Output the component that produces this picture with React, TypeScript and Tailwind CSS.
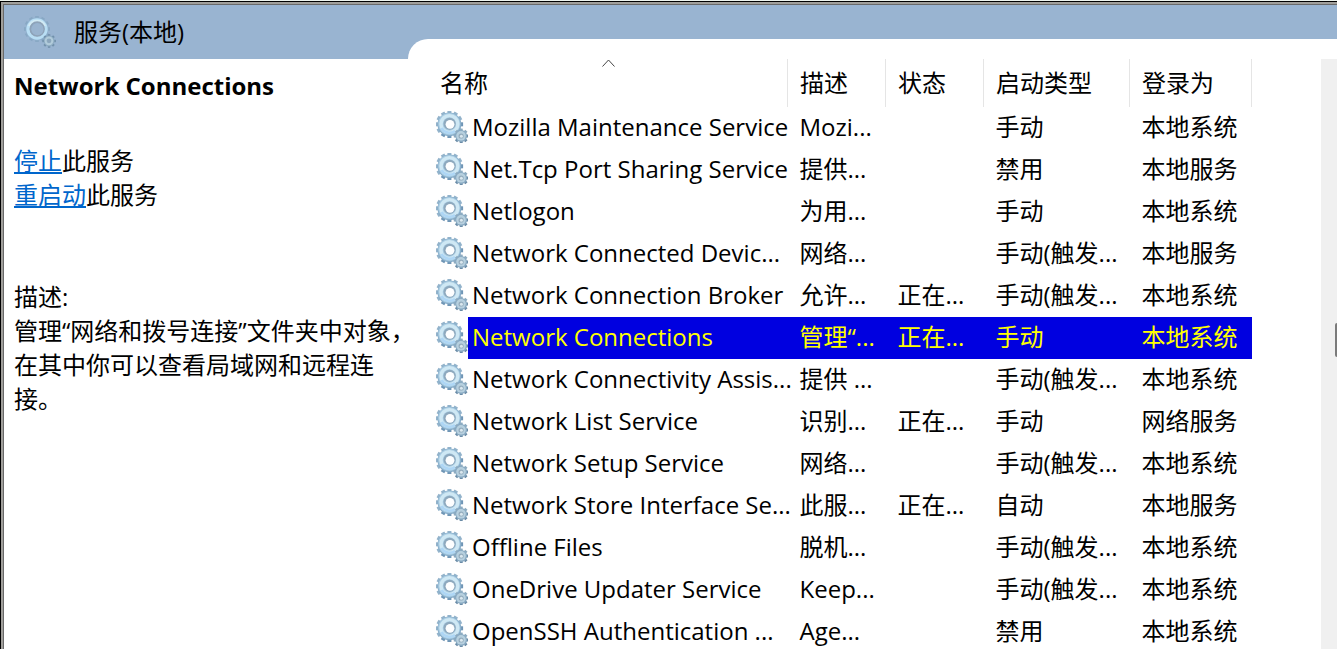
type Service = {
  name: string;
  desc: string;
  status: string;
  start: string;
  logon: string;
};

const services: Service[] = [
  { name: "Mozilla Maintenance Service", desc: "Mozi...", status: "", start: "手动", logon: "本地系统" },
  { name: "Net.Tcp Port Sharing Service", desc: "提供...", status: "", start: "禁用", logon: "本地服务" },
  { name: "Netlogon", desc: "为用...", status: "", start: "手动", logon: "本地系统" },
  { name: "Network Connected Devic...", desc: "网络...", status: "", start: "手动(触发...", logon: "本地服务" },
  { name: "Network Connection Broker", desc: "允许...", status: "正在...", start: "手动(触发...", logon: "本地系统" },
  { name: "Network Connections", desc: "管理“...", status: "正在...", start: "手动", logon: "本地系统" },
  { name: "Network Connectivity Assis...", desc: "提供 ...", status: "", start: "手动(触发...", logon: "本地系统" },
  { name: "Network List Service", desc: "识别...", status: "正在...", start: "手动", logon: "网络服务" },
  { name: "Network Setup Service", desc: "网络...", status: "", start: "手动(触发...", logon: "本地系统" },
  { name: "Network Store Interface Se...", desc: "此服...", status: "正在...", start: "自动", logon: "本地服务" },
  { name: "Offline Files", desc: "脱机...", status: "", start: "手动(触发...", logon: "本地系统" },
  { name: "OneDrive Updater Service", desc: "Keep...", status: "", start: "手动(触发...", logon: "本地系统" },
  { name: "OpenSSH Authentication ...", desc: "Age...", status: "", start: "禁用", logon: "本地系统" },
];

const selected = "Network Connections";

const bigTeeth = [0, 30, 60, 90, 120, 150, 180, 210, 240, 270, 300, 330];
const smallTeeth = [0, 45, 90, 135, 180, 225, 270, 315];

function ServiceIcon() {
  return (
    <svg viewBox="0 0 32 32" className="size-8 shrink-0" aria-hidden="true">
      {bigTeeth.map((a) => (
        <rect key={a} x="11.4" y="-0.4" width="4" height="5" fill={a > 60 && a < 240 ? "#6f95b5" : "#93b3cb"} transform={`rotate(${a} 13.4 13.3)`} />
      ))}
      <circle cx="13.4" cy="13.3" r="11.9" fill="#86acc9" />
      <circle cx="13.2" cy="12.9" r="11" fill="#a9cce2" />
      <circle cx="13.4" cy="13" r="8.4" fill="none" stroke="#cfe8f4" strokeWidth="3.4" />
      <path d="M5.6 17a9 9 0 0 0 13.4 3" fill="none" stroke="#aed6f5" strokeWidth="2.6" />
      <circle cx="13.6" cy="12.8" r="6.1" fill="#8ea9be" />
      <circle cx="14" cy="13.3" r="4.4" fill="#fdfeff" />
      {smallTeeth.map((a) => (
        <rect key={a} x="23.7" y="17.6" width="3" height="4" fill={a > 45 && a < 250 ? "#6a8ba6" : "#8eabc0"} transform={`rotate(${a} 25.2 25)`} />
      ))}
      <circle cx="25.2" cy="25" r="5.9" fill="#8aabc3" />
      <circle cx="25" cy="24.8" r="4.8" fill="#b7d0df" />
      <circle cx="25.1" cy="25" r="2.6" fill="#94acbd" />
      <circle cx="25.4" cy="25.3" r="1.5" fill="#dbe8ef" />
    </svg>
  );
}

function HeaderIcon() {
  return (
    <svg viewBox="0 0 32 32" className="size-8 shrink-0" aria-hidden="true">
      {bigTeeth.map((a) => (
        <rect key={a} x="11.2" y="0" width="3.6" height="4" fill="#88a8c4" transform={`rotate(${a} 13 13)`} />
      ))}
      <circle cx="13" cy="13" r="11.4" fill="#8fb0cd" />
      <circle cx="13" cy="13" r="9" fill="none" stroke="#b9def4" strokeWidth="3.4" />
      <path d="M5 10a8.8 8.8 0 0 1 16 0" fill="none" stroke="#d3ebf4" strokeWidth="2.4" />
      <circle cx="13.2" cy="13" r="6.8" fill="none" stroke="#8fa3b8" strokeWidth="1.8" />
      <circle cx="13.4" cy="13.2" r="6" fill="#9ab4cf" />
      {smallTeeth.map((a) => (
        <rect key={a} x="23.9" y="18.2" width="2.4" height="3" fill="#7190aa" transform={`rotate(${a} 25.1 25)`} />
      ))}
      <circle cx="25.1" cy="25" r="5.4" fill="#8dabc2" />
      <circle cx="25" cy="24.8" r="3.4" fill="none" stroke="#b1cbda" strokeWidth="2" />
      <circle cx="25.1" cy="25" r="1.8" fill="#8ba5bb" />
    </svg>
  );
}

const headCell = "h-12 border-r border-[#e5e5e5] p-0 pl-3 text-left font-normal";

export default function App() {
  return (
    <div className="h-screen overflow-hidden bg-[#eef4ee] pt-px font-['Open_Sans','Noto_Sans_CJK_SC',sans-serif] text-2xl text-black">
      <div className="h-full border-t border-l border-black">
        <div className="h-full border-t-2 border-l-2 border-[#a09f9b]">
          <div className="flex h-full border-t border-l border-[#696969] bg-white">
            <aside className="w-[404px] shrink-0">
              <header className="flex h-[54px] items-center bg-[#99b4d1] pl-5">
                <HeaderIcon />
                <h1 className="pl-[18px] leading-[34px]">服务(本地)</h1>
              </header>
              <div className="pt-[10px] pl-[10px] leading-[34px] whitespace-nowrap">
                <h2 className="font-bold">Network Connections</h2>
                <div className="pt-[41px]">
                  <p>
                    <a href="#stop" className="text-[#0066cc] underline decoration-2 underline-offset-2">停止</a>此服务
                  </p>
                  <p>
                    <a href="#restart" className="text-[#0066cc] underline decoration-2 underline-offset-2">重启动</a>此服务
                  </p>
                </div>
                <div className="pt-[68px]">
                  <p>描述:</p>
                  <p>
                    管理“网络和拨号连接”文件夹中对象，
                    <br />
                    在其中你可以查看局域网和远程连
                    <br />
                    接。
                  </p>
                </div>
              </div>
            </aside>

            <main className="flex min-w-0 flex-1 flex-col bg-[#99b4d1] pt-[34px]">
              <div className="flex min-h-0 flex-1 flex-col rounded-tl-[20px] bg-white pt-5">
                <div className="flex min-h-0 flex-1">
                  <div className="min-w-0 flex-1 pr-[69px] pl-5">
                    <table className="w-full table-fixed border-collapse">
                      <colgroup>
                        <col />
                        <col className="w-[98px]" />
                        <col className="w-[98px]" />
                        <col className="w-[146px]" />
                        <col className="w-[122px]" />
                      </colgroup>
                      <thead>
                        <tr>
                          <th className={headCell}>
                            <div className="relative">
                              名称
                              <svg viewBox="0 0 13 8" className="absolute -top-2 right-[172px] h-2 w-[13px]" aria-hidden="true">
                                <path d="M0.5 7.5 6.5 1 12.5 7.5" fill="none" stroke="#444" />
                              </svg>
                            </div>
                          </th>
                          <th className={headCell}>描述</th>
                          <th className={headCell}>状态</th>
                          <th className={headCell}>启动类型</th>
                          <th className={headCell}>登录为</th>
                        </tr>
                      </thead>
                      <tbody>
                        {services.map((s) => {
                          const on = s.name === selected;
                          const cell = on
                            ? "h-[42px] bg-[#0000e0] p-0 pb-0.5 pl-3 whitespace-nowrap text-[#ffff00]"
                            : "h-[42px] p-0 pb-0.5 pl-3 whitespace-nowrap";
                          return (
                            <tr key={s.name} aria-selected={on}>
                              <td className="h-[42px] p-0 pl-2 whitespace-nowrap">
                                <div className="flex h-[42px]">
                                  <div className="pt-1">
                                    <ServiceIcon />
                                  </div>
                                  <div className={on ? "flex flex-1 items-center bg-[#0000e0] pb-0.5 pl-1 text-[#ffff00]" : "flex flex-1 items-center pb-0.5 pl-1"}>
                                    {s.name}
                                  </div>
                                </div>
                              </td>
                              <td className={cell}>{s.desc}</td>
                              <td className={cell}>{s.status}</td>
                              <td className={cell}>{s.start}</td>
                              <td className={cell}>{s.logon}</td>
                            </tr>
                          );
                        })}
                      </tbody>
                    </table>
                  </div>
                  <div className="flex w-4 shrink-0 justify-end bg-[#f0f0f0] pt-[264px]">
                    <div className="h-[34px] w-[2px] rounded-l-sm bg-[#7b7b7b]" />
                  </div>
                </div>
              </div>
            </main>
          </div>
        </div>
      </div>
    </div>
  );
}
